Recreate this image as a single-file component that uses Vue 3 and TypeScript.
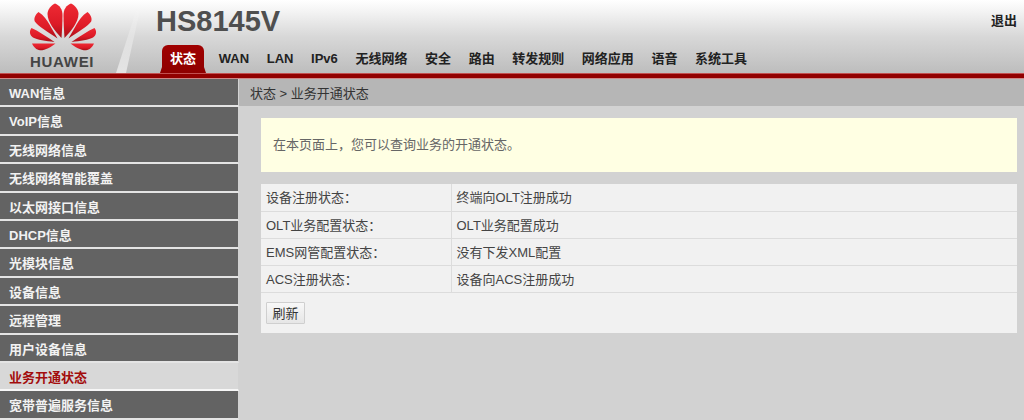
<script setup lang="ts">
const nav: string[] = ['状态', 'WAN', 'LAN', 'IPv6', '无线网络', '安全', '路由', '转发规则', '网络应用', '语音', '系统工具']
const side: string[] = ['WAN信息', 'VoIP信息', '无线网络信息', '无线网络智能覆盖', '以太网接口信息', 'DHCP信息', '光模块信息', '设备信息', '远程管理', '用户设备信息', '业务开通状态', '宽带普遍服务信息']
const rows: [string, string][] = [
  ['设备注册状态：', '终端向OLT注册成功'],
  ['OLT业务配置状态：', 'OLT业务配置成功'],
  ['EMS网管配置状态：', '没有下发XML配置'],
  ['ACS注册状态：', '设备向ACS注册成功'],
]
const petals: string[] = [
  'M61.5 37C55 30 47.5 21 47.5 13C47.5 8.5 51 4.5 55 2.5C59.500 4 62.500 8.500 62.500 14C62.500 22 62 30 61.500 37Z',
  'M57.5 37.500C48 31 38 25 34.800 20.500C33.500 17.500 35.500 13.500 38.500 11C44 14.500 47 19 49.500 23.500C52 28 55 33 57.500 37.500Z',
  'M54.5 41C46 40 37 39 33 36.500C29.500 34 29 30 31.500 27C38 30 46 35 54.500 41Z',
  'M55.5 42.500L32 42.500C33.500 46 36.500 49 40 49.300C45 49.500 51 46 55.500 42.500Z',
]
</script>

<template>
  <div class="page">
    <header class="top">
      <svg class="stripe" width="40" height="73" viewBox="0 0 40 73" aria-hidden="true">
        <defs>
          <linearGradient id="st" x1="0" y1="0" x2="0" y2="1">
            <stop offset="0" stop-color="#fff" stop-opacity="0" />
            <stop offset="1" stop-color="#fff" stop-opacity=".6" />
          </linearGradient>
        </defs>
        <polygon points="22,5 25,5 10,73 0,73" fill="url(#st)" />
      </svg>
      <div class="brand">
        <svg class="mark" width="126" height="54" viewBox="0 0 126 54" aria-hidden="true">
          <defs>
            <linearGradient id="pet" x1="0" y1="0" x2="0" y2="1">
              <stop offset="0" stop-color="#ee2a34" />
              <stop offset=".6" stop-color="#dc1a26" />
              <stop offset="1" stop-color="#a50f16" />
            </linearGradient>
          </defs>
          <g v-for="(d, i) in petals" :key="i">
            <path :d="d" fill="url(#pet)" />
            <path :d="d" fill="url(#pet)" transform="matrix(-1 0 0 1 126 0)" />
          </g>
        </svg>
        <span class="word">HUAWEI</span>
      </div>
      <div class="head-main">
        <h1 class="title">HS8145V</h1>
        <nav class="nav">
          <a v-for="(n, i) in nav" :key="n" class="nav-item" :class="{ on: i === 0 }">{{ n }}</a>
        </nav>
      </div>
      <a class="exit">退出</a>
    </header>
    <div class="redbar"></div>
    <div class="body">
      <aside class="side">
        <a v-for="(s, i) in side" :key="s" class="side-item" :class="{ on: i === 10 }">{{ s }}</a>
      </aside>
      <section class="content">
        <div class="crumb">状态 &gt; 业务开通状态</div>
        <div class="main">
          <div class="tip">在本页面上，您可以查询业务的开通状态。</div>
          <div class="panel">
            <table class="tbl">
              <tbody>
                <tr v-for="r in rows" :key="r[0]">
                  <td class="k">{{ r[0] }}</td>
                  <td class="v">{{ r[1] }}</td>
                </tr>
              </tbody>
            </table>
            <div class="actions"><button class="btn" type="button">刷新</button></div>
          </div>
        </div>
      </section>
    </div>
  </div>
</template>

<style>
html, body { margin: 0; background: #d2d2d2; }
</style>

<style scoped>
.page {
  width: 1024px;
  height: 420px;
  overflow: hidden;
  background: #d2d2d2;
  font-family: "Liberation Sans", "Noto Sans CJK SC", sans-serif;
  font-size: 13px;
  color: #444;
}
.top {
  position: relative;
  display: flex;
  height: 73px;
  background: linear-gradient(#fff 0%, #f4f4f4 15%, #d8d8d8 50%, #bdbdbd 100%);
}
.stripe { position: absolute; left: 116px; top: 0; }
.brand {
  position: relative;
  width: 156px;
  flex: none;
}
.mark { display: block; margin-top: 1px; }
.word {
  position: absolute;
  left: 30px;
  top: 53px;
  font-weight: 700;
  font-size: 15px;
  letter-spacing: .7px;
  color: #454545;
}
.head-main { display: flex; flex-direction: column; }
.title {
  margin: 4px 0 0;
  font-size: 29px;
  line-height: 34px;
  font-weight: 700;
  color: #4f4f4f;
}
.nav { display: flex; margin: 7px 0 0 5px; height: 28px; }
.nav-item {
  padding: 0 8.8px;
  line-height: 28px;
  font-weight: 700;
  color: #222;
  white-space: nowrap;
}
.nav-item.on {
  position: relative;
  padding: 0 8px;
  margin: 0 6px 0 1px;
  color: #fff;
  background: linear-gradient(#a00000, #8e0000);
  border-radius: 6px 6px 0 0;
}
.nav-item.on::before,
.nav-item.on::after {
  content: "";
  position: absolute;
  bottom: 0;
  width: 0;
  height: 0;
  border-bottom: 6px solid #8e0000;
}
.nav-item.on::before { left: -2px; border-left: 2px solid transparent; }
.nav-item.on::after { right: -2px; border-right: 2px solid transparent; }
.exit {
  position: absolute;
  right: 7px;
  top: 13px;
  font-weight: 700;
  line-height: 16px;
  color: #222;
}
.redbar {
  height: 4px;
  background: #920000;
  border-top: 1px solid #c25050;
  border-bottom: 1px solid #c88;
}
.body { display: flex; }
.side {
  width: 239px;
  flex: none;
  display: flex;
  flex-direction: column;
}
.side-item {
  display: block;
  box-sizing: border-box;
  height: 28.4px;
  line-height: 24px;
  padding: 3px 0 0 9px;
  font-weight: 700;
  color: #f2f2f2;
  background: #636363;
  border-bottom: 2px solid #e4e4e4;
  border-right: 1px solid #d2d2d2;
}
.side-item.on {
  background: #d8d8d8;
  color: #a30d0d;
  border-bottom-color: #f6f6f6;
}
.content { flex: 1; min-width: 0; }
.crumb {
  height: 26px;
  line-height: 27px;
  padding: 1px 0 0 11px;
  color: #333;
  background: #b6b6b6;
}
.main { padding: 12px 7px 0 22px; }
.tip {
  height: 54px;
  line-height: 54px;
  padding-left: 12px;
  color: #666;
  background: #ffffe3;
}
.panel { margin-top: 12px; background: #f1f1f1; }
.tbl { width: 100%; border-collapse: collapse; table-layout: fixed; }
.tbl td {
  height: 27px;
  padding: 0 0 1px 5px;
  box-sizing: border-box;
  border-bottom: 1px solid #dcdcdc;
  color: #444;
  white-space: nowrap;
}
.tbl .k { width: 190px; border-right: 1px solid #dcdcdc; }
.actions { height: 40px; padding: 9px 0 0 5px; box-sizing: border-box; }
.btn {
  display: block;
  width: 39px;
  height: 22px;
  padding: 0;
  font: inherit;
  color: #333;
  background: linear-gradient(#f8f8f8, #e6e6e6);
  border: 1px solid #cfcfcf;
  border-radius: 1px;
}
</style>
